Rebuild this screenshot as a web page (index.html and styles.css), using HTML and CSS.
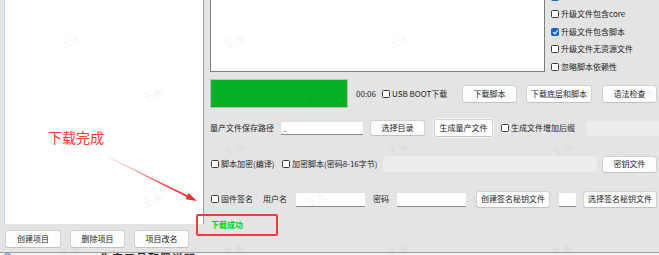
FILE: index.html
```html
<!DOCTYPE html>
<html lang="zh-CN">
<head>
    <meta charset="UTF-8">
    <title>量产工具</title>
    <link rel="stylesheet" href="styles.css">
</head>
<body>
    <div class="app">
        <div class="side">
            <div class="project-list"></div>
            <div class="side-actions">
                <button class="btn w56">创建项目</button>
                <button class="btn w55">删除项目</button>
                <button class="btn w55">项目改名</button>
            </div>
        </div>

        <div class="main">
            <div class="top-row">
                <div class="log"></div>
                <div class="opts">
                    <label class="chk"><input type="checkbox" checked></label>
                    <label class="chk"><input type="checkbox">升级文件包含core</label>
                    <label class="chk"><input type="checkbox" checked>升级文件包含脚本</label>
                    <label class="chk"><input type="checkbox">升级文件无资源文件</label>
                    <label class="chk"><input type="checkbox">忽略脚本依赖性</label>
                </div>
            </div>

            <div class="row progress-row">
                <div class="progress"><div class="progress-fill"></div></div>
                <span class="time">00:06</span>
                <label class="chk usb"><input type="checkbox">USB BOOT下载</label>
                <button class="btn w55">下载脚本</button>
                <button class="btn w66 ml9">下载底层和脚本</button>
                <button class="btn w55 ml10">语法检查</button>
            </div>

            <div class="row row-out">
                <span class="lbl out-lbl">量产文件保存路径</span>
                <input class="field out-path" type="text" value=".">
                <button class="btn w55 short ml6">选择目录</button>
                <button class="btn btn-default ml9">生成量产文件</button>
                <label class="chk suffix"><input type="checkbox">生成文件增加后缀</label>
                <input class="field disabled suffix-field" type="text" disabled>
            </div>

            <div class="row row-enc">
                <label class="chk enc1"><input type="checkbox">脚本加密(编译)</label>
                <label class="chk enc2"><input type="checkbox">加密脚本(密码8-16字节)</label>
                <input class="field disabled key-field" type="text" disabled>
                <button class="btn w55 ml5">密钥文件</button>
            </div>

            <div class="row row-sign">
                <label class="chk sign"><input type="checkbox">固件签名</label>
                <span class="lbl user-lbl">用户名</span>
                <input class="field w71" type="text">
                <span class="lbl pwd-lbl">密码</span>
                <input class="field w71" type="password">
                <button class="btn w74 ml9">创建签名秘钥文件</button>
                <input class="field tiny" type="text">
                <button class="btn w74 ml6">选择签名秘钥文件</button>
            </div>

            <div class="row status-row">
                <span class="status">下载成功</span>
            </div>
        </div>
    </div>

    <div class="taskbar">
        <span class="task-icon"></span>
        <span class="task-text">生产工具配置说明</span>
    </div>

    <div class="note">下载完成</div>
    <svg class="arrow" width="659" height="255" viewBox="0 0 659 255">
        <defs>
            <linearGradient id="arrowFade" x1="110" y1="158" x2="197" y2="201" gradientUnits="userSpaceOnUse">
                <stop offset="0" stop-color="#ff3b3b" stop-opacity="0.25"/>
                <stop offset="0.6" stop-color="#f53030" stop-opacity="0.85"/>
                <stop offset="1" stop-color="#f02a2a"/>
            </linearGradient>
        </defs>
        <polygon fill="url(#arrowFade)"
            points="110.1,157.8 187.5,195.2 188.6,193.0 197,201 185.5,199.2 186.7,197.0 109.9,158.2"/>
    </svg>
    <div class="highlight"></div>
    <div class="marks" id="marks"></div>

    <script>
        // faint watermark grid over the window
        var marks = document.getElementById("marks");
        var rows = [40, 94, 148, 199, 250];
        for (var r = 0; r < rows.length; r++) {
            var start = r % 2 === 0 ? 70 : 152;
            for (var x = start; x < 680; x += 164) {
                var m = document.createElement("span");
                m.className = "mark";
                m.textContent = "王永";
                m.style.left = (x - 11) + "px";
                m.style.top = (rows[r] - 7) + "px";
                marks.appendChild(m);
            }
        }
    </script>
</body>
</html>
```

FILE: styles.css
```css
html, body {
    margin: 0;
    padding: 0;
}

body {
    width: 659px;
    height: 255px;
    overflow: hidden;
    position: relative;
    background-color: #e4e4e4;
    font-family: "Noto Sans CJK SC", "Microsoft YaHei", sans-serif;
    font-size: 8px;
    line-height: 10px;
    color: #1c1c1c;
}

.app {
    display: flex;
    height: 252px;
}

/* left: project list */
.side {
    margin-left: 4px;
    width: 200px;
    display: flex;
    flex-direction: column;
}

.project-list {
    height: 224px;
    background-color: #fff;
    border-left: 1px solid #c4d4f6;
    border-right: 1px solid #a3a3a3;
    box-sizing: border-box;
}

.side-actions {
    display: flex;
    gap: 9px;
    padding: 6px 0 0 1px;
}

/* buttons */
.btn {
    height: 18px;
    padding: 0;
    font-family: inherit;
    font-size: 8px;
    line-height: 10px;
    color: #1c1c1c;
    background-color: #fdfdfd;
    border: 1px solid #d2d2d2;
    border-bottom-color: #c2c2c2;
    border-radius: 3px;
    flex: none;
}

.btn.short {
    height: 16px;
}

.btn-default {
    width: 59px;
    box-shadow: 0 0 0 1px #f4f4f4;
}

.w55 { width: 55px; }
.w56 { width: 56px; }
.w66 { width: 66px; }
.w71 { width: 71px; }
.w74 { width: 74px; height: 17px; }

.ml5 { margin-left: 5px; }
.ml6 { margin-left: 6px; }
.ml9 { margin-left: 9px; }
.ml10 { margin-left: 10px; }

/* right: main panel */
.main {
    margin-left: 6px;
    width: 449px;
    display: flex;
    flex-direction: column;
}

.top-row {
    display: flex;
    height: 72px;
}

.log {
    width: 335px;
    height: 72px;
    background-color: #fff;
    border: 1px solid #7c7c7c;
    border-top: none;
    box-sizing: border-box;
}

.opts {
    margin-left: 6px;
    margin-top: -12px;
    display: flex;
    flex-direction: column;
}

.opts .chk {
    height: 17.5px;
}

/* checkboxes */
.chk {
    display: flex;
    align-items: center;
    white-space: nowrap;
    flex: none;
}

.chk input {
    appearance: none;
    -webkit-appearance: none;
    width: 8px;
    height: 8px;
    margin: 0 2px 0 0;
    border: 1px solid #3a3a3a;
    border-radius: 1.5px;
    background-color: #fff;
    box-sizing: border-box;
    flex: none;
    position: relative;
}

.chk input:checked {
    background-color: #1466c6;
    border-color: #1466c6;
}

.chk input:checked::after {
    content: "";
    position: absolute;
    left: 1.5px;
    top: 0.5px;
    width: 2px;
    height: 4px;
    border: solid #fff;
    border-width: 0 1px 1px 0;
    transform: rotate(40deg);
}

/* rows */
.row {
    display: flex;
    align-items: center;
}

.progress-row {
    margin-top: 7px;
    height: 29px;
}

.progress {
    width: 138px;
    height: 29px;
    border: 1px solid #bcbcbc;
    background-color: #e6e6e6;
    box-sizing: border-box;
    flex: none;
}

.progress-fill {
    width: 100%;
    height: 100%;
    background-color: #06b025;
}

.time {
    width: 26px;
    margin-left: 8px;
    flex: none;
}

.usb { width: 80px; }

.row-out {
    margin-top: 10px;
    height: 20px;
}

.lbl {
    white-space: nowrap;
    flex: none;
}

.out-lbl { width: 70px; }

.field {
    height: 14px;
    padding: 0 3px;
    font-family: inherit;
    font-size: 8px;
    color: #1c1c1c;
    background-color: #fff;
    border: 1px solid #e2e2e2;
    border-bottom-color: #8a8a8a;
    border-radius: 2px;
    box-sizing: border-box;
    flex: none;
    outline: none;
}

.field.disabled {
    background-color: #ededed;
    border-color: #ededed;
}

.out-path {
    width: 84px;
}

.suffix {
    width: 85px;
    margin-left: 8px;
}

.suffix-field {
    width: 80px;
    height: 15px;
}

.row-enc {
    margin-top: 16px;
    height: 20px;
}

.enc1 { width: 71px; margin-left: 1px; }
.enc2 { width: 101px; }

.key-field {
    width: 214px;
    height: 16px;
}

.row-enc .btn { height: 17px; }

.row-sign {
    margin-top: 15px;
    height: 20px;
}

.row-sign .field { height: 15px; }

.sign { width: 52px; margin-left: 1px; }
.user-lbl { width: 32px; }
.pwd-lbl { width: 23px; margin-left: 7px; }

.field.tiny {
    width: 19px;
    margin-left: 8px;
}

.status-row {
    margin-top: 9px;
    height: 14px;
}

.status {
    margin-left: 1px;
    color: #00d800;
    font-weight: bold;
}

/* strip of the window below */
.taskbar {
    height: 3px;
    border-top: 1px solid #a2a2a2;
    background-color: #f2f2f2;
    overflow: hidden;
    position: relative;
}

.task-icon {
    position: absolute;
    left: 3px;
    top: 0;
    width: 7px;
    height: 7px;
    border: 1px solid #2f6fd6;
    border-radius: 50%;
}

.task-text {
    position: absolute;
    left: 100px;
    top: 0;
    font-size: 11px;
    line-height: 11px;
    font-weight: bold;
    letter-spacing: 1px;
    color: #222;
}

/* annotations over the screenshot */
.note {
    position: absolute;
    left: 48px;
    top: 130px;
    font-size: 14px;
    line-height: 14px;
    color: #ff3a33;
}

.arrow {
    position: absolute;
    left: 0;
    top: 0;
    pointer-events: none;
}

.highlight {
    position: absolute;
    left: 196px;
    top: 214px;
    width: 78px;
    height: 18px;
    border: 2px solid #f03c3c;
    border-radius: 2px;
}

.marks {
    position: absolute;
    left: 0;
    top: 0;
    width: 659px;
    height: 255px;
    pointer-events: none;
}

.mark {
    position: absolute;
    font-size: 11px;
    line-height: 14px;
    color: rgba(0, 0, 0, 0.07);
    transform: rotate(-22deg);
}
```
